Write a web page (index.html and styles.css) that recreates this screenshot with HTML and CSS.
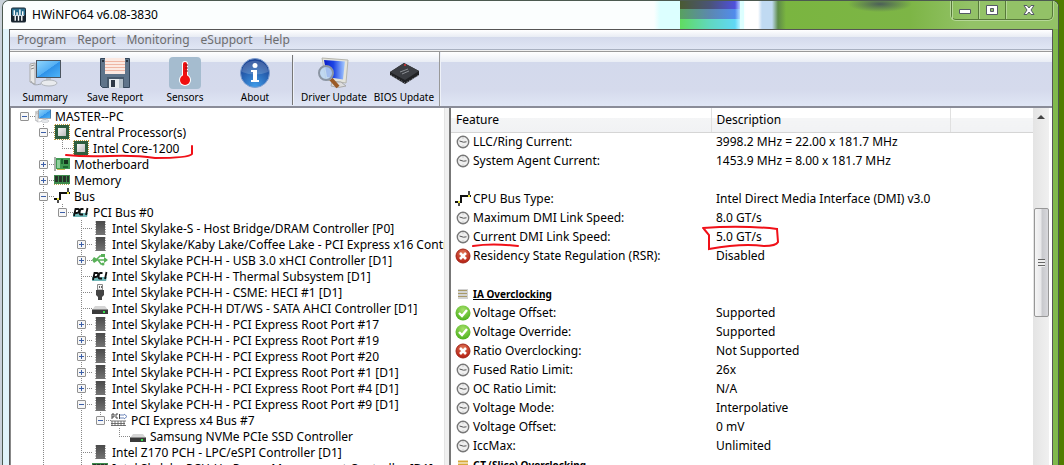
FILE: index.html
```html
<!DOCTYPE html>
<html lang="en">
<head>
<meta charset="utf-8">
<title>HWiNFO64 v6.08-3830</title>
<link rel="stylesheet" href="styles.css">
</head>
<body>
<svg class="defs" aria-hidden="true">
<defs>
<linearGradient id="g-screen" x1="0" y1="0" x2="1" y2="1"><stop offset="0" stop-color="#8fd4fb"/><stop offset=".5" stop-color="#55b0f4"/><stop offset=".52" stop-color="#2f92e8"/><stop offset="1" stop-color="#4fb4f8"/></linearGradient>
<linearGradient id="g-chip" x1="0" y1="0" x2="1" y2="1"><stop offset="0" stop-color="#f4f4f4"/><stop offset="1" stop-color="#bcbcbc"/></linearGradient>
<linearGradient id="g-ic" x1="0" y1="0" x2="0" y2="1"><stop offset="0" stop-color="#4a4a4a"/><stop offset="1" stop-color="#747474"/></linearGradient>
<radialGradient id="g-green" cx=".5" cy=".3" r=".7"><stop offset="0" stop-color="#a5e06a"/><stop offset="1" stop-color="#4cb01c"/></radialGradient>
<radialGradient id="g-red" cx=".5" cy=".3" r=".7"><stop offset="0" stop-color="#e07858"/><stop offset="1" stop-color="#b41c10"/></radialGradient>
<radialGradient id="g-info" cx=".5" cy=".95" r=".8"><stop offset="0" stop-color="#3f9be8"/><stop offset="1" stop-color="#1c4596"/></radialGradient>
<linearGradient id="g-blue" x1="0" y1="0" x2="1" y2="0"><stop offset="0" stop-color="#0a1cc8"/><stop offset=".45" stop-color="#1c44e4"/><stop offset="1" stop-color="#a8ccff"/></linearGradient>
</defs>
<symbol id="pc" viewBox="0 0 32 32"><path d="M1 7l5-1v21l-5-2z" fill="#e8e8e8" stroke="#aaa"/><path d="M2 9l3-1M2 12l3-1" stroke="#888"/><path d="M7 3h25v18H7z" fill="#4c5560"/><path d="M8 4h23v16H8z" fill="url(#g-screen)"/><path d="M17 21h5v4h-5z" fill="#b9bec6"/><ellipse cx="20" cy="26" rx="8" ry="3" fill="#e9ebee" stroke="#b2b6bc"/><path d="M2 24c2 5 5 4 10 3" fill="none" stroke="#a0a5ad"/></symbol>
<symbol id="cpu" viewBox="0 0 16 16"><path d="M.5 1v15M15.500 1v15M1 .5h15M1 15.500h15" stroke="#b8973a" stroke-dasharray="1 1"/><path d="M1 1h14v14H1z" fill="#2d5e3e"/><path d="M4 4h8v8H4z" fill="url(#g-chip)"/></symbol>
<symbol id="board" viewBox="0 0 16 16"><path d="M1 2h15v11H1z" fill="#3f9b52"/><path d="M0 1h2v14H0z" fill="#a9b0a9"/><path d="M3 4h3v8H3z" fill="#8fd09b"/><path d="M7 3h2v5H7zM9 10h5v2H9z" fill="#1f6b34"/><path d="M10 4h4v4h-4z" fill="#14351d"/><path d="M3 13h8v1H3z" fill="#c6b552"/></symbol>
<symbol id="ram" viewBox="0 0 16 16"><path d="M0 3h16v9H0z" fill="#3d8a4c"/><path d="M1 4h3v6H1zM5 4h3v6H5zM9 4h3v6H9zM13 4h2v6h-2z" fill="#27342a"/><path d="M0 12.500h16" stroke="#b5a554" stroke-dasharray="1 1"/></symbol>
<symbol id="bus" viewBox="0 0 16 16"><path d="M0 11h6V5h10" fill="none" stroke="#111" stroke-width="2"/><path d="M4 10v5M14 0v6" stroke="#111" stroke-width="1.500"/><path d="M3 10h2v2H3zM13 4h2v2h-2z" fill="#e9e43a"/></symbol>
<symbol id="pci" viewBox="0 0 16 16"><path d="M0 9h15l-1 4H0z" fill="#6fb7b7"/><path d="M1 12L2.500 5H5q1.500 0 1 2t-2 2H2M10.500 5H8.500Q7 5 6.700 8t1.300 2.500h2M14.500 4L13 11" fill="none" stroke="#101010" stroke-width="1.800"/></symbol>
<symbol id="pcie" viewBox="0 0 16 16"><path d="M1 7V2h2v3H1M7 2H5v4h2M8.500 2v5" fill="none" stroke="#444"/><path d="M9 3h4M9 6h4M13 2l3 2.500L13 7" fill="none" stroke="#6a83b8"/><path d="M0 9h15M0 11.500h14M0 13.500h15M1 9v5M4 9v5M7 9v5M10 9v5M13 9v5" stroke="#555" stroke-width=".8"/></symbol>
<symbol id="ic" viewBox="0 0 16 16"><path d="M3 2h11M3 4.500h11M3 7h11M3 9.500h11M3 12h11M3 14.500h11" stroke="#9a9a9a"/><path d="M4 1h9v14H4z" fill="url(#g-ic)"/></symbol>
<symbol id="usb" viewBox="0 0 16 16"><path d="M1 8h13M4 8l4-4h3M6 8l3 4h3" fill="none" stroke="#58b058" stroke-width="1.500"/><path d="M12 5l4 3-4 3zM9 2h4v3H9zM0 8l2-3 3 2v2l-3 2z" fill="#58b058"/><circle cx="11" cy="12" r="1.500" fill="#58b058"/></symbol>
<symbol id="plug" viewBox="0 0 16 16"><path d="M5.500.5h5V6h-5z" fill="#f4f4f4" stroke="#888"/><path d="M7 2h1v2H7zM9 2h1v2H9z" fill="#666"/><path d="M4 6h8v5l-2 2v3H6v-3l-2-2z" fill="#444"/></symbol>
<symbol id="disk" viewBox="0 0 16 16"><path d="M3 6h10l3 4H0z" fill="#d6d6d6"/><path d="M0 9h16v5H0z" fill="#3a3a3a"/><path d="M0 9h16v1H0z" fill="#8d8d8d"/><path d="M11 11h2v2h-2z" fill="#36e04c"/></symbol>
<symbol id="clock" viewBox="0 0 16 16"><circle cx="8" cy="8" r="5.700" fill="#efefef" stroke="#777" stroke-width="1.400"/><path d="M4.500 7l4 1.200 3-.4" fill="none" stroke="#555"/><path d="M8 3.500v1M8 11.500v1" stroke="#aaa"/></symbol>
<symbol id="yes" viewBox="0 0 16 16"><circle cx="8" cy="8" r="7.500" fill="url(#g-green)"/><path d="M4 8l3 3 5-6" fill="none" stroke="#fff" stroke-width="2.400"/></symbol>
<symbol id="no" viewBox="0 0 16 16"><circle cx="8" cy="8" r="7" fill="url(#g-red)" stroke="#a3271b"/><path d="M5 5l6 6M11 5l-6 6" stroke="#fff" stroke-width="2.600"/></symbol>
<symbol id="list" viewBox="0 0 16 16"><path d="M3 3h10v10H3z" fill="#d2d2d2"/><path d="M3 4.500h9M3 7.500h9M3 10.500h9" stroke="#a89a68"/></symbol>
<symbol id="list-y" viewBox="0 0 16 16"><path d="M3 3h10v10H3z" fill="#f3e6c0"/><path d="M3 4.500h10M3 7.500h10M3 10.500h10" stroke="#d8a83a" stroke-width="1.600"/></symbol>
</svg>

<div class="window">
<header class="titlebar">
<svg class="logo" viewBox="0 0 16 16" aria-hidden="true"><rect width="16" height="16" rx="2" fill="#17242f"/><path d="M1 1h14v7H1z" fill="#2a6d8c"/><path d="M3.500 3v5M6.500 5v3M9.500 2v6M12.500 4v4M4.500 9v5M8 9v5M11.500 9v5" stroke="#fff" stroke-width="1.500"/><path d="M2 8.500h12" stroke="#dcecf4"/></svg>
<h1>HWiNFO64 v6.08-3830</h1>
<div class="desktop" aria-hidden="true"></div>
<div class="controls">
<button aria-label="Minimize"><svg viewBox="0 0 14 14"><path d="M1.500 6.500h11v4h-11z" fill="#fff" stroke="#555a66"/></svg></button>
<button aria-label="Maximize"><svg viewBox="0 0 14 14"><path d="M1.500 2.500h11v9h-11zM5.500 5.500v3h3v-3z" fill="#fff" fill-rule="evenodd" stroke="#555a66"/></svg></button>
<button class="close" aria-label="Close"><svg viewBox="0 0 14 14"><path d="M2 2.500h3L7 5l2-2.500h3L9 7l3 4.500H9L7 9l-2 2.500H2L5 7z" fill="#fff" stroke="#555a66"/></svg></button>
</div>
</header>
<div class="client">
<nav class="menu"><button>Program</button><button>Report</button><button>Monitoring</button><button>eSupport</button><button>Help</button></nav>
<div class="toolbar">
<button><svg viewBox="0 0 32 32"><use href="#pc"/></svg>Summary</button>
<button><svg viewBox="0 0 32 32"><path d="M1.500 1.500h29v29H3.500l-2-2z" fill="#5f748a" stroke="#34465a"/><path d="M6 1h20v16H6z" fill="#fbe9e2"/><path d="M6 4.500h20M6 7.500h20M6 10.500h20M6 13.500h20" stroke="#efb6a4"/><path d="M3 3h2v2H3zM27 3h2v2h-2z" fill="#26333f"/><path d="M8 20h17v11H8z" fill="#46586b"/><path d="M10 22h14v9H10z" fill="#e6ebef"/><path d="M12 23h4v7h-4z" fill="#2d3845"/><path d="M20 22h4v9h-4z" fill="#b4c0ca"/></svg>Save Report</button>
<button><svg viewBox="0 0 32 32"><rect width="32" height="32" rx="4" fill="#a5bccf"/><path d="M16 7v15" stroke="#fff" stroke-width="6" stroke-linecap="round"/><circle cx="16" cy="23" r="6" fill="#fff"/><path d="M16 7v15" stroke="#f01010" stroke-width="4" stroke-linecap="round"/><circle cx="16" cy="23" r="5" fill="#f01010"/><path d="M16 8h3M16 11h3M16 14h3" stroke="#8c1414"/></svg>Sensors</button>
<button><svg viewBox="0 0 32 32"><circle cx="16" cy="16" r="14.500" fill="url(#g-info)" stroke="#7f9fd0"/><path d="M3 15C3 0 29 0 29 15Q16 20 3 15z" fill="#fff" opacity=".18"/><circle cx="16" cy="8.500" r="2.500" fill="#fff"/><path d="M12 13h6v10h2v2h-8v-2h2v-8h-2z" fill="#fff"/></svg>About</button>
<hr>
<button><svg viewBox="0 0 32 32"><path d="M4 1l26 2-2 23-20-3z" fill="#e4e4dc" stroke="#b5b5ad"/><path d="M6 3l21 1.500-2 18L9 20z" fill="url(#g-blue)"/><path d="M14 25h9l5 4q-8 3-15 0z" fill="#ddd" stroke="#aaa"/><path d="M13 22l7 8" stroke="#9b5a26" stroke-width="4"/><circle cx="8" cy="16" r="7" fill="#bcd7f2" fill-opacity=".85" stroke="#8b95a3" stroke-width="2"/></svg>Driver Update</button>
<button><svg viewBox="0 0 32 32"><path d="M2 15l14-9 15 8v4L17 27 2 18z" fill="#202124"/><path d="M2 15l14-9 15 8-14 9z" fill="#3b3d42"/><path d="M3 18l14 8 14-8" fill="none" stroke="#898c92" stroke-dasharray="1 2"/><path d="M12 15l8-3M14 17l7-3" stroke="#8a8d93"/><circle cx="17" cy="8" r="1" fill="#e03030"/></svg>BIOS Update</button>
<hr class="end">
</div>
<main class="panes">
<section class="tree" aria-label="Devices">
<ul>
<li><div class="row"><button class="box" aria-label="Collapse"></button><svg><use href="#pc"/></svg>MASTER--PC</div>
<ul>
<li><div class="row"><button class="box" aria-label="Collapse"></button><svg><use href="#cpu"/></svg>Central Processor(s)</div>
<ul><li><div class="row marked"><i></i><svg><use href="#cpu"/></svg>Intel Core-1200<svg class="ink ink-core" viewBox="0 0 130 16" aria-hidden="true"><path d="M1 10Q20 12 45 11T90 13Q124 13 127 9V1" /></svg></div></li></ul></li>
<li><div class="row"><button class="box plus" aria-label="Expand"></button><svg><use href="#board"/></svg>Motherboard</div></li>
<li><div class="row"><button class="box plus" aria-label="Expand"></button><svg><use href="#ram"/></svg>Memory</div></li>
<li class="more"><div class="row"><button class="box" aria-label="Collapse"></button><svg><use href="#bus"/></svg>Bus</div>
<ul><li><div class="row"><button class="box" aria-label="Collapse"></button><svg><use href="#pci"/></svg>PCI Bus #0</div>
<ul>
<li><div class="row"><i></i><svg><use href="#ic"/></svg>Intel Skylake-S - Host Bridge/DRAM Controller [P0]</div></li>
<li><div class="row"><button class="box plus" aria-label="Expand"></button><svg><use href="#ic"/></svg>Intel Skylake/Kaby Lake/Coffee Lake - PCI Express x16 Controller</div></li>
<li><div class="row"><button class="box plus" aria-label="Expand"></button><svg><use href="#usb"/></svg>Intel Skylake PCH-H - USB 3.0 xHCI Controller [D1]</div></li>
<li><div class="row"><i></i><svg><use href="#pci"/></svg>Intel Skylake PCH-H - Thermal Subsystem [D1]</div></li>
<li><div class="row"><i></i><svg><use href="#plug"/></svg>Intel Skylake PCH-H - CSME: HECI #1 [D1]</div></li>
<li><div class="row"><i></i><svg><use href="#disk"/></svg>Intel Skylake PCH-H DT/WS - SATA AHCI Controller [D1]</div></li>
<li><div class="row"><button class="box plus" aria-label="Expand"></button><svg><use href="#ic"/></svg>Intel Skylake PCH-H - PCI Express Root Port #17</div></li>
<li><div class="row"><button class="box plus" aria-label="Expand"></button><svg><use href="#ic"/></svg>Intel Skylake PCH-H - PCI Express Root Port #19</div></li>
<li><div class="row"><button class="box plus" aria-label="Expand"></button><svg><use href="#ic"/></svg>Intel Skylake PCH-H - PCI Express Root Port #20</div></li>
<li><div class="row"><button class="box plus" aria-label="Expand"></button><svg><use href="#ic"/></svg>Intel Skylake PCH-H - PCI Express Root Port #1 [D1]</div></li>
<li><div class="row"><button class="box plus" aria-label="Expand"></button><svg><use href="#ic"/></svg>Intel Skylake PCH-H - PCI Express Root Port #4 [D1]</div></li>
<li><div class="row"><button class="box" aria-label="Collapse"></button><svg><use href="#ic"/></svg>Intel Skylake PCH-H - PCI Express Root Port #9 [D1]</div>
<ul><li><div class="row"><button class="box" aria-label="Collapse"></button><svg><use href="#pcie"/></svg>PCI Express x4 Bus #7</div>
<ul><li><div class="row"><i></i><svg><use href="#disk"/></svg>Samsung NVMe PCIe SSD Controller</div></li></ul></li></ul></li>
<li><div class="row"><i></i><svg><use href="#ic"/></svg>Intel Z170 PCH - LPC/eSPI Controller [D1]</div></li>
<li class="more"><div class="row"><i></i><svg><use href="#ram"/></svg>Intel Skylake PCH-H - Power Management Controller [D1]</div></li>
</ul></li></ul></li>
</ul></li>
</ul>
</section>
<section class="details" aria-label="Details">
<table>
<thead><tr><th class="feature">Feature</th><th class="desc">Description</th><th></th></tr></thead>
<tbody>
<tr><td><div><svg><use href="#clock"/></svg>LLC/Ring Current:</div></td><td colspan="2">3998.2 MHz = 22.00 x 181.7 MHz</td></tr>
<tr><td><div><svg><use href="#clock"/></svg>System Agent Current:</div></td><td colspan="2">1453.9 MHz = 8.00 x 181.7 MHz</td></tr>
<tr><td></td><td colspan="2"></td></tr>
<tr><td><div><svg><use href="#bus"/></svg>CPU Bus Type:</div></td><td colspan="2">Intel Direct Media Interface (DMI) v3.0</td></tr>
<tr><td><div><svg><use href="#clock"/></svg>Maximum DMI Link Speed:</div></td><td colspan="2">8.0 GT/s</td></tr>
<tr><td><div class="marked"><svg><use href="#clock"/></svg>Current DMI Link Speed:<svg class="ink ink-current" viewBox="0 0 48 6" aria-hidden="true"><path d="M1 4Q20 1 46 4"/></svg></div></td><td colspan="2"><div class="marked">5.0 GT/s<svg class="ink ink-speed" viewBox="0 0 78 26" aria-hidden="true"><path d="M1 3Q40 0 75 4L76 17Q74 21 62 21Q40 18 7 24V10L2 4"/></svg></div></td></tr>
<tr><td><div><svg><use href="#no"/></svg>Residency State Regulation (RSR):</div></td><td colspan="2">Disabled</td></tr>
<tr><td></td><td colspan="2"></td></tr>
<tr><td><div><svg><use href="#list"/></svg><strong>IA Overclocking</strong></div></td><td colspan="2"></td></tr>
<tr><td><div><svg><use href="#yes"/></svg>Voltage Offset:</div></td><td colspan="2">Supported</td></tr>
<tr><td><div><svg><use href="#yes"/></svg>Voltage Override:</div></td><td colspan="2">Supported</td></tr>
<tr><td><div><svg><use href="#no"/></svg>Ratio Overclocking:</div></td><td colspan="2">Not Supported</td></tr>
<tr><td><div><svg><use href="#clock"/></svg>Fused Ratio Limit:</div></td><td colspan="2">26x</td></tr>
<tr><td><div><svg><use href="#clock"/></svg>OC Ratio Limit:</div></td><td colspan="2">N/A</td></tr>
<tr><td><div><svg><use href="#clock"/></svg>Voltage Mode:</div></td><td colspan="2">Interpolative</td></tr>
<tr><td><div><svg><use href="#clock"/></svg>Voltage Offset:</div></td><td colspan="2">0 mV</td></tr>
<tr><td><div><svg><use href="#clock"/></svg>IccMax:</div></td><td colspan="2">Unlimited</td></tr>
<tr><td><div><svg><use href="#list-y"/></svg><strong>GT (Slice) Overclocking</strong></div></td><td colspan="2"></td></tr>
</tbody>
</table>
<div class="scrollbar" aria-hidden="true"><span class="up"></span><span class="thumb"></span></div>
</section>
</main>
</div>
</div>
</body>
</html>
```
FILE: styles.css
```css
* { box-sizing: border-box; }
body {
  margin: 0;
  height: 100vh;
  overflow: hidden;
  padding: 0 5px 0 2px;
  background: linear-gradient(90deg, #c9d2da 50%, #4f7d00 50%);
  font-family: "Noto Sans", sans-serif;
  font-size: 12px;
  color: #000;
}
button { border: 0; padding: 0; background: none; font: inherit; color: inherit; }
.defs { position: absolute; width: 0; height: 0; }
.window {
  display: flex;
  flex-direction: column;
  height: 100%;
  padding: 0 5px 0 6px;
  border: 1px solid #4c5a50;
  border-bottom: 0;
  border-radius: 7px 7px 0 0;
  background: linear-gradient(90deg, #e0f4fa 50%, #80b94c 50%);
  overflow: hidden;
}
.titlebar {
  display: flex;
  flex: none;
  align-items: center;
  height: 28px;
  margin: 0 -5px 0 -6px;
  padding: 0 6px 0 8px;
  background: #fbfefe;
  position: relative;
}
.logo { width: 15px; height: 16px; }
h1 { margin: 0 0 0 6px; font-size: 12px; font-weight: 400; line-height: 16px; flex: 1; }
.desktop {
  width: 418px;
  margin-right: -6px;
  align-self: stretch;
  background:
    linear-gradient(90deg, #fbfefe00 32px, #fbfefe00 44px, #fff0 95px, #dcffff 102px) 0 0 / 104px 28px no-repeat,
    linear-gradient(90deg, #4a5a32, #4a5478 50%, #5050f0) 40px 0 / 60px 8px no-repeat,
    linear-gradient(90deg, #58a060, #5c88b0 50%, #4f8cf8) 40px 8px / 60px 10px no-repeat,
    linear-gradient(90deg, #60dc60, #60d8c0 50%, #60d8ff) 40px 18px / 60px 10px no-repeat,
    radial-gradient(closest-side, #4c5f58, #4c5f5800) 208px -5px / 64px 16px no-repeat,
    linear-gradient(90deg, #fbfefe 0, #fbfefe 14px, #dcffff 20px, #dcffff 98px, #fff 106px, #fff 118px, #c0daf2 122px, #c0daf2 132px, #5e8c48 138px, #7ab540 146px, #7db546 270px, #93c267 330px, #93c267);
}
.controls {
  position: absolute;
  right: 5px;
  top: 0;
  display: flex;
  height: 19px;
  border: 1px solid #57793a;
  border-top: 0;
  border-radius: 0 0 5px 5px;
  box-shadow: 0 0 0 1px #b5d797;
}
.controls button { display: grid; place-items: center; width: 27px; border-right: 1px solid #57793a; box-shadow: inset 1px 0 #b5d797; }
.controls .close { width: 46px; border: 0; }
.controls svg { width: 14px; height: 14px; }
.client { display: flex; flex-direction: column; flex: 1; min-height: 0; border: 1px solid #555; border-bottom: 0; background: #f0f0f0; }
.menu {
  display: flex;
  flex: none;
  gap: 11px;
  height: 20px;
  padding-left: 7px;
  border-bottom: 1px solid #a8b0c0;
  background: linear-gradient(#fff, #e8ecf4 7px, #d4daec 7px, #e0e6f4);
  color: #6d6d6d;
}
.toolbar {
  display: flex;
  flex: none;
  height: 57px;
  margin-top: 1px;
  border-top: 1px solid #999;
  border-bottom: 2px solid #8a8c98;
  background: linear-gradient(#fff, #e9edf5 10px, #d3d9ec 10px, #d5daec 38px, #e0e6f5);
}
.toolbar button { display: flex; flex-direction: column; align-items: center; width: 70px; padding-top: 5px; font-size: 10px; line-height: 14px; white-space: nowrap; }
.toolbar svg { width: 32px; height: 32px; margin-bottom: 1px; }
.toolbar hr { width: 2px; height: 50px; margin: 3px 5px 0 2px; border: 0; border-left: 1px solid #777; background: #eef1f8; }
.toolbar .end { height: 54px; margin: 0; border-color: #999; }
.panes { display: grid; grid-template-columns: 435px 1fr; flex: 1; min-height: 0; background: #fff; }
.tree { overflow: hidden; padding-left: 4px; border-left: 1px solid #888; border-right: 1px solid #e4e4e4; white-space: nowrap; }
.tree ul { margin: 0; padding: 0; list-style: none; }
.tree ul ul { padding-left: 19px; }
.tree ul ul > li { background: repeating-linear-gradient(#888 0 1px, #fff 1px 2px) 9px 0 / 1px 100% no-repeat; }
.tree ul ul > li:last-child:not(.more) { background-size: 1px 8px; }
.row { display: flex; align-items: center; height: 16px; background: repeating-linear-gradient(90deg, #888 0 1px, #fff 1px 2px) 9px 8px / 11px 1px no-repeat; }
.row > svg { flex: none; width: 16px; height: 16px; margin: 0 4px 0 1px; }
.row i { flex: none; width: 19px; }
.box {
  flex: none;
  width: 9px;
  height: 9px;
  margin: 0 5px;
  border: 1px solid #919191;
  border-radius: 1px;
  background: linear-gradient(#3c5fa8, #3c5fa8) center / 5px 1px no-repeat, #f6f6f6;
}
.box.plus { background: linear-gradient(#3c5fa8, #3c5fa8) center / 5px 1px no-repeat, linear-gradient(#3c5fa8, #3c5fa8) center / 1px 5px no-repeat, #f6f6f6; }
.details { display: flex; min-width: 0; overflow: hidden; margin-left: 4px; border-left: 2px solid #777; box-shadow: -4px 0 #f0f0f0; padding-right: 3px; }
table { flex: 1; border-collapse: collapse; table-layout: fixed; align-self: flex-start; }
th { height: 24px; padding: 0 5px; border-right: 1px solid #e0e0e0; border-bottom: 1px solid #d5d5d5; background: linear-gradient(#fff 40%, #f4f5f6 40%, #f1f2f4); font-weight: 400; text-align: left; }
th:last-child { border-right: 0; }
.feature { width: 260px; }
.desc { width: 239px; }
td { height: 19px; padding: 0 5px; line-height: 18px; white-space: nowrap; }
td:first-child { padding-left: 4px; }
td > div { display: flex; align-items: center; height: 18px; }
td > div > svg { flex: none; width: 16px; height: 16px; margin-right: 2px; }
strong { font-size: 10px; text-decoration: underline; }
.scrollbar { display: flex; flex: none; flex-direction: column; align-items: center; width: 16px; background: linear-gradient(90deg, #e4e4e4, #f0f0f0); }
.up { margin: 7px 0 89px; border: 4px solid transparent; border-top: 0; border-bottom-color: #444; }
.thumb {
  width: 15px;
  height: 109px;
  border: 1px solid #979797;
  border-radius: 2px;
  background:
    repeating-linear-gradient(#666 0 1px, #eee 1px 3px) center / 7px 8px no-repeat,
    linear-gradient(90deg, #f5f5f5, #e8e8ea 45%, #c8c9cd 55%, #d8d8dc);
}
.marked { position: relative; }
.marked > .ink { position: absolute; margin: 0; fill: none; stroke: #f01018; stroke-width: 2; stroke-linecap: round; }
.row > .ink-core { left: 12px; top: 5px; width: 130px; height: 16px; }
td > div > .ink-current { left: 17px; top: 14px; width: 48px; height: 6px; }
td > div > .ink-speed { left: -14px; top: -3px; width: 78px; height: 26px; }
```
